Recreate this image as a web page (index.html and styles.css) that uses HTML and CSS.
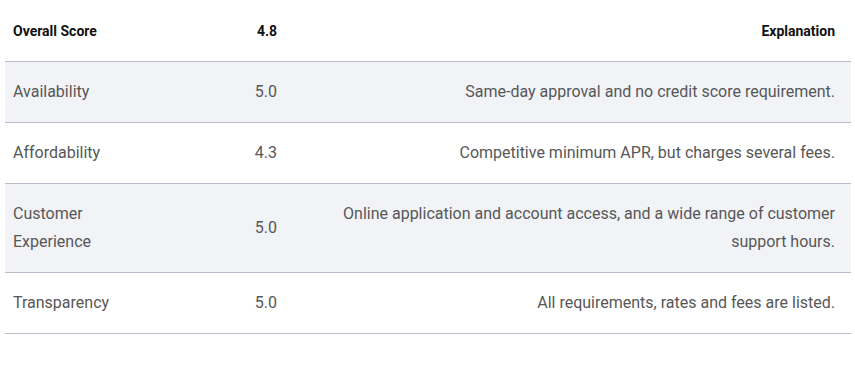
FILE: index.html
```html
<!DOCTYPE html>
<html lang="en">
<head>
  <meta charset="UTF-8" />
  <title>Overall Score</title>
  <link rel="stylesheet" href="styles.css">
</head>
<body>
  <table class="score-table">
    <colgroup>
      <col class="col-label">
      <col class="col-score">
      <col class="col-text">
    </colgroup>
    <thead>
      <tr>
        <th class="label">Overall Score</th>
        <th class="score">4.8</th>
        <th class="text">Explanation</th>
      </tr>
    </thead>
    <tbody>
      <tr>
        <td class="label">Availability</td>
        <td class="score">5.0</td>
        <td class="text">Same-day approval and no credit score requirement.</td>
      </tr>
      <tr>
        <td class="label">Affordability</td>
        <td class="score">4.3</td>
        <td class="text">Competitive minimum APR, but charges several fees.</td>
      </tr>
      <tr>
        <td class="label">Customer Experience</td>
        <td class="score">5.0</td>
        <td class="text">Online application and account access, and a wide range of customer support hours.</td>
      </tr>
      <tr>
        <td class="label">Transparency</td>
        <td class="score">5.0</td>
        <td class="text">All requirements, rates and fees are listed.</td>
      </tr>
    </tbody>
  </table>
</body>
</html>
```

FILE: styles.css
```css
body {
  margin: 0 4px 0 5px;
  padding: 0;
  font-family: Roboto, "Liberation Sans", sans-serif;
  background: #ffffff;
}

.score-table {
  width: 846px;
  border-collapse: collapse;
  table-layout: fixed;
}

.col-label { width: 135px; }
.col-score { width: 145px; }

.score-table th,
.score-table td {
  padding: 16px 8px;
  line-height: 28px;
  border-bottom: 1px solid #b9bdcc;
  vertical-align: middle;
}

.score-table th {
  font-size: 14px;
  font-weight: bold;
  color: #111111;
  padding-top: 17px;
  padding-bottom: 16px;
}

.score-table td {
  font-size: 16px;
  color: #575757;
}

.score-table tbody tr:nth-child(odd) {
  background: #f1f3f7;
}

.label { text-align: left; }
.score { text-align: right; }
.text {
  text-align: right;
  padding-right: 16px !important;
}
```
